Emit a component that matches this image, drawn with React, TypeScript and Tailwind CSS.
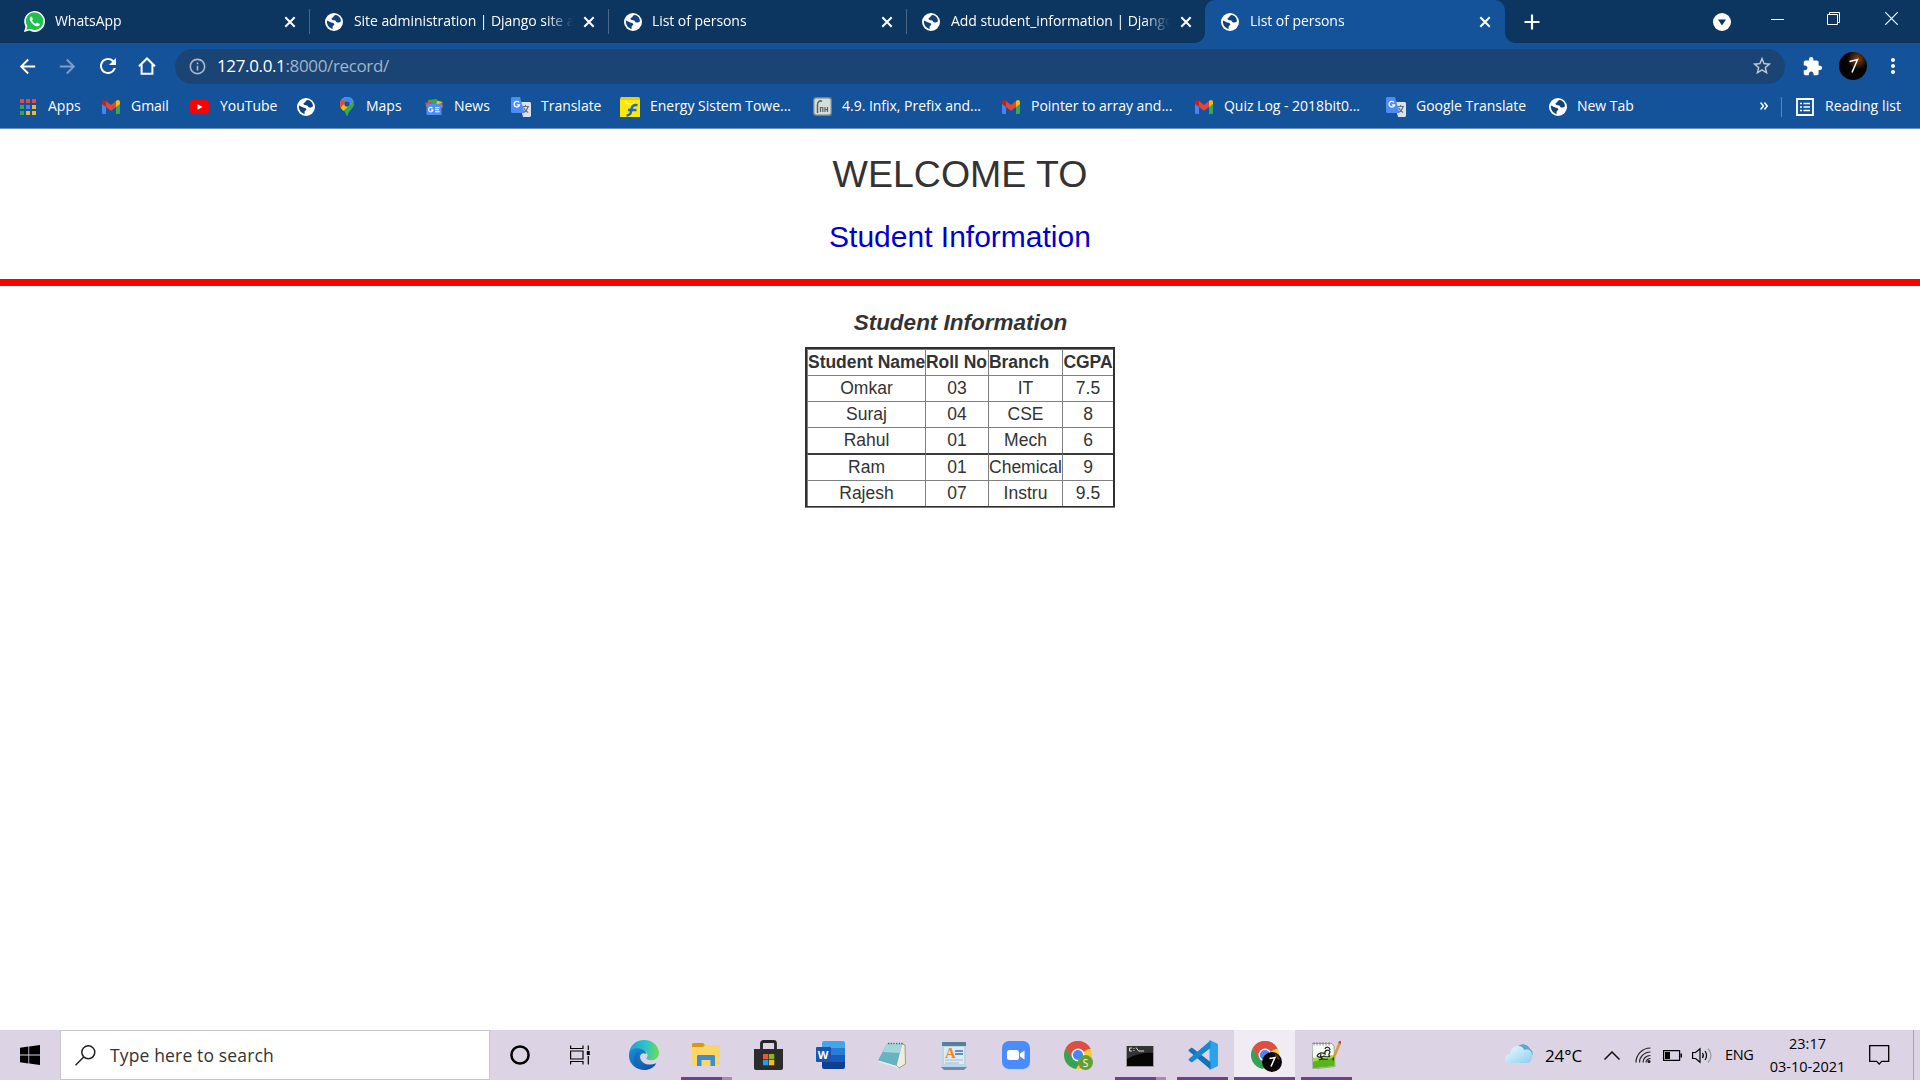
import React from "react";
import { MdArrowBack, MdArrowForward, MdRefresh, MdInfoOutline, MdStarBorder, MdExtension, MdMoreVert } from "react-icons/md";

const uiFont = "font-['Open_Sans','Noto_Sans',sans-serif]";

function Globe() {
  return (
    <svg className="size-[18px] shrink-0" viewBox="0 0 18 18">
      <circle cx="9" cy="9" r="9" fill="#fff" />
      <path d="M10.8 1.9 C8 2.4 9.2 4 7.2 4.8 C6 5.3 6.6 6.6 7.6 6.9 L10.2 7.4 C11.2 7.8 11 9.4 12.5 9.4 L14 9.4 L15.9 8.6 C16.2 5 14 2.5 10.8 1.9Z" fill="#12427c" />
      <path d="M2 7.6 L6.2 9.5 C7.6 10 9 10 9.3 11.2 C9.5 12.4 7.6 12.4 7.6 13.8 L7.6 15.9 C4 15.4 1.3 11.5 2 7.6Z" fill="#12427c" />
    </svg>
  );
}

function WhatsApp() {
  return (
    <svg className="size-[21px] shrink-0" viewBox="0 0 24 24">
      <path d="M0 24l1.7-6.2A11.9 11.9 0 1 1 6.3 22.4Z" fill="#fff" />
      <path d="M2.7 21.3l1.1-4.1A10 10 0 1 1 7 20.2Z" fill="#1fc04c" />
      <path d="M8.6 6.2c-.6 0-2.3 1-2 3.1.4 3 4.6 7.6 8.1 8.1 2 .3 3.2-1 3.3-2.3 0-.5-.2-.6-2.8-1.8-.8-.3-1.2 1.4-1.8 1.4-1.4-.3-3.8-2.4-4.2-3.9.1-.5 1.1-1 .9-1.6C9.3 7 9.3 6.300 8.600 6.200Z" fill="#fff" />
    </svg>
  );
}

function AppsIcon() {
  const colors = ["#e8483c", "#e8483c", "#e8483c", "#2fa45a", "#3f83f0", "#f4b52a", "#2fa45a", "#f4b52a", "#f4b52a"];
  return (
    <div className="grid grid-cols-3 gap-[2px]">
      {colors.map((c, i) => (
        <i key={i} className="size-[4px]" style={{ background: c }} />
      ))}
    </div>
  );
}

function Gmail() {
  return (
    <svg className="h-[14px] w-[18px] shrink-0" viewBox="0 0 18 14">
      <path d="M0 2v10.500C0 13.500.6 14 1.400 14H4V6Z" fill="#4285f4" />
      <path d="M18 2v10.500c0 1-.6 1.500-1.400 1.500H14V6Z" fill="#34a853" />
      <path d="M0 2.200C0 .2 2-.5 3.400.6L4 1.100V7L0 4Z" fill="#c5221f" />
      <path d="M18 2.200c0-2-2-2.700-3.400-1.600l-.6.5V7l4-3Z" fill="#fbbc04" />
      <path d="M4 1.100 9 5l5-3.900V7l-5 3.800L4 7Z" fill="#ea4335" />
    </svg>
  );
}

function YouTube() {
  return (
    <svg className="h-[14px] w-[19px] shrink-0" viewBox="0 0 19 14">
      <rect width="19" height="14" rx="3.500" fill="#f00" />
      <path d="M7.500 4.200v5.600l5-2.800Z" fill="#fff" />
    </svg>
  );
}

function MapsPin() {
  return (
    <svg className="h-[19px] w-[14px] shrink-0" viewBox="0 0 14 19">
      <path d="M7 0a7 7 0 0 1 7 7c0 4.500-5.500 6.500-6.200 11-.1 1.300-1.500 1.300-1.600 0C5.600 13.500 0 11.500 0 7a7 7 0 0 1 7-7Z" fill="#34a853" />
      <path d="M7 0a7 7 0 0 1 6.500 4.400L3.300 14C1.500 12 0 10 0 7a7 7 0 0 1 7-7Z" fill="#fbbc04" />
      <path d="M7 0a7 7 0 0 1 6.500 4.400L7 9.500 1.800 2.400A7 7 0 0 1 7 0Z" fill="#4285f4" />
      <path d="M1.800 2.400 5.400 5.500.8 10.500C-.4 7.500-.2 4.500 1.800 2.400Z" fill="#ea4335" />
      <circle cx="7" cy="7" r="2.600" fill="#1d4f96" />
    </svg>
  );
}

function News() {
  return (
    <svg className="h-[16px] w-[18px] shrink-0" viewBox="0 0 18 16">
      <path d="M3 1 12 0v5H3Z" fill="#34a853" />
      <path d="M12 1.500 17.500 3 16 8h-5Z" fill="#fbbc04" />
      <path d="M0 4l6-1.500L8 8 2 9Z" fill="#ea4335" />
      <path d="M17 3.500 18 8l-3 2-4-4Z" fill="#e8604a" />
      <rect x="1.500" y="5" width="15" height="11" rx="1" fill="#4f8df5" />
      <path d="M7.500 9.300A2.200 2.200 0 1 0 7.900 11H6M10 8.700h4.500M10 10.700h4M10 12.700h4.500" stroke="#fff" strokeWidth="1.100" fill="none" />
    </svg>
  );
}

function Translate() {
  return (
    <svg className="size-[20px] shrink-0" viewBox="0 0 20 20">
      <path d="M8 5h10.500c.8 0 1.500.7 1.500 1.500V18.500c0 .8-.7 1.500-1.500 1.500H12Z" fill="#dde2ea" />
      <path d="M11 9.500h7M14.500 8v1.500M17 9.500c-.7 3-2.500 5-5 6M12.500 10.500c.8 2 2.500 4 4.700 5" stroke="#68727f" strokeWidth="1.200" fill="none" />
      <path d="M1.400 0H9l4.500 16H1.400C.6 16 0 15.400 0 14.600V1.400C0 .6.600 0 1.400 0Z" fill="#4e8bf4" />
      <path d="M8 5.400A2.800 2.800 0 1 0 8.600 7.800H5.900" stroke="#fff" strokeWidth="1.300" fill="none" />
    </svg>
  );
}

function Flipkart() {
  return (
    <svg className="size-[20px] shrink-0" viewBox="0 0 20 20">
      <path d="M1 0h18l1 3v17H0V3Z" fill="#fde903" />
      <path d="M0 3h20L19 0H1Z" fill="#efc90c" />
      <path d="M5.500 4c.8 4 8.200 4 9 0" stroke="#fff8a8" strokeWidth="1.200" fill="none" />
      <path d="M17.500 8.300c-3.600-.8-5.300.4-5.900 3.200C11 15 11 18.500 6.500 18.500M8 13h8.500" stroke="#2368c4" strokeWidth="2.500" fill="none" />
    </svg>
  );
}

function Runestone() {
  return (
    <svg className="size-[19px] shrink-0" viewBox="0 0 19 19">
      <rect x=".7" y=".7" width="17.600" height="17.600" rx="2.500" fill="#d5dcda" stroke="#73827f" strokeWidth="1.400" />
      <path d="M4.500 16V8C4.500 4.500 7 3 9 4.500" stroke="#56645f" strokeWidth="1.500" fill="none" />
      <path d="M7.500 10v5M9.800 10v5M12 10v5M14.500 10v5M7.500 10.500H9M12 12.500h2.500" stroke="#56645f" strokeWidth="1.200" fill="none" />
    </svg>
  );
}

const tabs = [
  { label: "WhatsApp", icon: <WhatsApp />, width: "w-[310px] pl-[24px]", gap: "ml-[10px]", right: "mr-[13px]", active: false, divider: true },
  { label: "Site administration | Django site admin", icon: <Globe />, width: "w-[299px] pl-[15px]", gap: "ml-[11px]", right: "mr-[13px]", active: false, divider: true },
  { label: "List of persons", icon: <Globe />, width: "w-[298px] pl-[15px]", gap: "ml-[10px]", right: "mr-[13px]", active: false, divider: true },
  { label: "Add student_information | Django site", icon: <Globe />, width: "w-[298px] pl-[15px]", gap: "ml-[11px]", right: "mr-[13px]", active: false, divider: false },
  { label: "List of persons", icon: <Globe />, width: "w-[300px] pl-[16px]", gap: "ml-[11px]", right: "mr-[14px]", active: true, divider: false },
];

function TabStrip() {
  return (
    <div className="flex h-[43px] bg-[#0c3560] text-white">
      {tabs.map((t, i) => (
        <div
          key={i}
          className={`relative flex shrink-0 items-center ${t.width} ${t.active ? "rounded-t-[10px] bg-[#14529a]" : ""}`}
        >
          {t.active && (
            <>
              <i className="absolute bottom-0 -left-[10px] size-[10px] bg-[radial-gradient(circle_at_0_0,#0c3560_9.500px,#14529a_10px)]" />
              <i className="absolute -right-[10px] bottom-0 size-[10px] bg-[radial-gradient(circle_at_100%_0,#0c3560_9.500px,#14529a_10px)]" />
            </>
          )}
          {t.icon}
          <span
            className={`min-w-0 flex-1 overflow-hidden pb-[2px] text-[14px] leading-[20px] tracking-[-0.06px] whitespace-nowrap ${t.gap} [mask-image:linear-gradient(to_right,black_88%,transparent)]`}
          >
            {t.label}
          </span>
          <svg className={`ml-[10px] size-[12px] shrink-0 ${t.right}`} viewBox="0 0 12 12">
            <path d="M1.300 1.300 10.700 10.700M10.700 1.300 1.300 10.700" stroke="#fff" strokeWidth="2" />
          </svg>
          {t.divider && <i className="h-[25px] w-px shrink-0 bg-[#4a6788]" />}
        </div>
      ))}
      <div className="flex w-[54px] items-center justify-center">
        <svg className="size-[16px]" viewBox="0 0 16 16">
          <path d="M8 .5v15M.5 8h15" stroke="#fff" strokeWidth="2.200" />
        </svg>
      </div>
      <div className="flex flex-1 items-center pl-[154px]">
        <svg className="mt-px size-[18px]" viewBox="0 0 18 18">
          <circle cx="9" cy="9" r="9" fill="#fff" />
          <path d="M5 6.500h8L9 12.500Z" fill="#0c3560" />
        </svg>
        <i className="mb-[5px] ml-[40px] h-px w-[13px] bg-white" />
        <svg className="mb-[6px] ml-[43px] size-[13px]" viewBox="0 0 13 13" fill="none" stroke="#fff">
          <path d="M.5 2.500h10v10H.5ZM2.500 2.500V.5h10v10h-2" />
        </svg>
        <svg className="mb-[6px] ml-[45px] size-[13px]" viewBox="0 0 13 13" stroke="#fff" strokeWidth="1.200">
          <path d="M.3.3l12.400 12.400M12.700.3.3 12.700" />
        </svg>
      </div>
    </div>
  );
}

function Toolbar() {
  return (
    <div className="flex h-[46px] items-center bg-[#14529a] text-white">
      <MdArrowBack className="ml-[16px] size-[23px]" />
      <MdArrowForward className="ml-[17px] size-[23px] text-[#7c9fca]" />
      <MdRefresh className="ml-[17px] size-[24px]" />
      <svg className="ml-[18px] size-[18px]" viewBox="0 0 18 18" fill="none" stroke="#fff" strokeWidth="2">
        <path d="M1 9.300 9 1.500l8 7.800M3.600 7.500v9.200h10.800V7.500" />
      </svg>
      <div className="ml-[19px] flex h-[35px] w-[1610px] items-center rounded-full bg-[#194474]">
        <MdInfoOutline className="ml-[13px] size-[19px] text-[#aeb9c8]" />
        <span className="ml-[10px] flex-1 text-[17px] leading-[22px] tracking-[-0.36px] text-[#a3b4ca]">
          <span className="text-white">127.0.0.1</span>:8000/record/
        </span>
        <MdStarBorder className="mr-[12px] size-[22px] text-[#c3c9d0]" />
      </div>
      <MdExtension className="ml-[17px] size-[21px]" />
      <svg className="ml-[16px] size-[28px]" viewBox="0 0 28 28">
        <defs>
          <radialGradient id="flare" cx=".66" cy=".25" r=".38">
            <stop offset="0" stopColor="#8a4310" />
            <stop offset="1" stopColor="#050303" />
          </radialGradient>
        </defs>
        <circle cx="14" cy="14" r="14" fill="url(#flare)" />
        <path d="M10.500 9.500l8-2-5.500 13" stroke="#fff" strokeWidth="1.500" fill="none" />
      </svg>
      <MdMoreVert className="ml-[14px] size-[24px]" />
    </div>
  );
}

const bookmarks = [
  { icon: <AppsIcon />, label: "Apps", slot: "w-[82px]", pad: "w-[28px]" },
  { icon: <Gmail />, label: "Gmail", slot: "w-[88px]", pad: "w-[29px]" },
  { icon: <YouTube />, label: "YouTube", slot: "w-[107px]", pad: "w-[30px]" },
  { icon: <Globe />, label: "", slot: "w-[43px]", pad: "w-[30px]" },
  { icon: <MapsPin />, label: "Maps", slot: "w-[85px]", pad: "w-[26px]" },
  { icon: <News />, label: "News", slot: "w-[86px]", pad: "w-[29px]" },
  { icon: <Translate />, label: "Translate", slot: "w-[109px]", pad: "w-[30px]" },
  { icon: <Flipkart />, label: "Energy Sistem Towe...", slot: "w-[193px]", pad: "w-[30px]" },
  { icon: <Runestone />, label: "4.9. Infix, Prefix and...", slot: "w-[189px]", pad: "w-[29px]" },
  { icon: <Gmail />, label: "Pointer to array and...", slot: "w-[193px]", pad: "w-[29px]" },
  { icon: <Gmail />, label: "Quiz Log - 2018bit0...", slot: "w-[191px]", pad: "w-[29px]" },
  { icon: <Translate />, label: "Google Translate", slot: "w-[163px]", pad: "w-[30px]" },
  { icon: <Globe />, label: "New Tab", slot: "w-[120px]", pad: "w-[28px]" },
];

function Bookmarks() {
  return (
    <div className="flex h-[40px] items-center border-b border-[#6b8cb8] bg-[#14529a] pb-[4px] pl-[20px] text-[14px] leading-[20px] text-white">
      {bookmarks.map((b, i) => (
        <div key={i} className={`flex shrink-0 items-center whitespace-nowrap ${b.slot}`}>
          <span className={`flex shrink-0 ${b.pad}`}>{b.icon}</span>
          <span className="pb-[2px] tracking-[-0.02px]">{b.label}</span>
        </div>
      ))}
      <div className="flex flex-1 items-center pl-[91px]">
        <svg className="mb-[2px] h-[8px] w-[8px]" viewBox="0 0 8 8" fill="none" stroke="#fff" strokeWidth="1.500">
          <path d="M.6.6 3.400 4 .6 7.400M4.400.6 7.200 4 4.400 7.400" />
        </svg>
        <i className="ml-[13px] h-[20px] w-px bg-[#5b86ba]" />
        <svg className="ml-[14px] size-[18px]" viewBox="0 0 18 18" fill="none" stroke="#fff">
          <path d="M1 1h16v16H1Z" strokeWidth="1.800" />
          <path d="M4 5.500h2M4 9h2M4 12.500h2M7.500 5.500H14M7.500 9H14M7.500 12.500H14" strokeWidth="1.600" />
        </svg>
        <span className="ml-[11px] pb-[2px] tracking-[0.1px] whitespace-nowrap">Reading list</span>
      </div>
    </div>
  );
}

const students = [
  ["Omkar", "03", "IT", "7.5"],
  ["Suraj", "04", "CSE", "8"],
  ["Rahul", "01", "Mech", "6"],
  ["Ram", "01", "Chemical", "9"],
  ["Rajesh", "07", "Instru", "9.5"],
];

function Page() {
  return (
    <main className="flex-1 bg-white font-['Liberation_Sans',Arial,sans-serif] text-[#333]">
      <h1 className="pt-[25px] text-center text-[37.5px] leading-[41px]">WELCOME TO</h1>
      <h3 className="pt-[25px] text-center text-[30px] leading-[33px] text-[#0000cc]">Student Information</h3>
      <div className="mt-[26px] h-[7px] bg-[#fe0000]" />
      <h4 className="pt-[25px] pl-px text-center text-[22.5px] leading-[24px] font-bold italic">Student Information</h4>
      <div className="mx-auto mt-[12px] w-[310px] border-b border-[#777]">
        <table className="w-full table-fixed border-separate border-spacing-0 border-t-2 border-r-2 border-b border-l-2 border-[#303030] text-center text-[17.5px] leading-[25px]">
          <colgroup>
            <col className="w-[118px]" />
            <col className="w-[63px]" />
            <col className="w-[74px]" />
            <col />
          </colgroup>
          <thead>
            <tr>
              {["Student Name", "Roll No", "Branch", "CGPA"].map((h) => (
                <th key={h} className={`border-t border-l border-[#808080] p-0 font-bold tracking-[-0.04px] whitespace-nowrap ${h === "CGPA" ? "text-center" : "text-left"}`}>
                  {h}
                </th>
              ))}
            </tr>
          </thead>
          <tbody>
            {students.map((row) => (
              <tr key={row[0]}>
                {row.map((c, i) => (
                  <td key={i} className={`border-l border-l-[#808080] p-0 ${row[0] === "Ram" ? "border-t-2 border-t-[#3c3c3c]" : "border-t border-t-[#808080]"}`}>
                    {c}
                  </td>
                ))}
              </tr>
            ))}
          </tbody>
        </table>
      </div>
    </main>
  );
}

function Edge() {
  return (
    <svg className="size-[30px]" viewBox="0 0 30 30">
      <defs>
        <linearGradient id="edgeTop" x1="0" y1=".4" x2="1" y2=".5">
          <stop offset="0" stopColor="#1c9fde" />
          <stop offset=".55" stopColor="#2fc3c8" />
          <stop offset="1" stopColor="#6ddb55" />
        </linearGradient>
        <linearGradient id="edgeLow" x1="0" y1="0" x2="1" y2="1">
          <stop offset="0" stopColor="#1b8fd8" />
          <stop offset="1" stopColor="#0d4a9c" />
        </linearGradient>
      </defs>
      <path d="M0 14C1 5 7 0 15 0c9 0 15 6.500 15 13 0 4.500-3.500 7.300-8 7.300-3.500 0-5-1.200-4.500-2.300 3-3-.3-7.500-5.500-7.500C6 9 2 10 0 14Z" fill="url(#edgeTop)" />
      <path d="M0 14C1.500 8.500 6.500 7.600 10.500 8.600c4 1 6.500 3 6.800 5.400C13 11.500 10 15 11.500 19c1.800 4.800 8 7.300 15.800 4.200C25 27.500 20.500 30 15.500 30 7 30-.8 24 0 14Z" fill="url(#edgeLow)" />
      <path d="M10.500 12C6.500 16 8 26 15.500 30 10 29.500 5 26 5 20c0-4 2.500-7 5.500-8Z" fill="#0f66b8" opacity=".6" />
    </svg>
  );
}

function Explorer() {
  return (
    <svg className="h-[24px] w-[28px]" viewBox="0 0 28 24">
      <path d="M0 1.500C0 .6.600 0 1.500 0H11l2 2h13.500c.8 0 1.500.7 1.500 1.500V22H0Z" fill="#fbd568" />
      <path d="M0 1.500C0 .6.600 0 1.500 0H11l2 2-2 2H0Z" fill="#d9990f" />
      <path d="M5 23v-9.500c0-.8.700-1.500 1.500-1.500h15c.8 0 1.500.7 1.500 1.500V23h-4.500v-6h-9v6Z" fill="#3b8ed0" />
    </svg>
  );
}

function Store() {
  return (
    <svg className="h-[30px] w-[29px]" viewBox="0 0 29 30">
      <path d="M7.500 10V3.500c0-1.200.8-2 2-2h10c1.200 0 2 .8 2 2V10" fill="none" stroke="#252525" strokeWidth="2.800" />
      <path d="M0 9h29v19c0 1.200-.8 2-2 2H2c-1.200 0-2-.8-2-2Z" fill="#2c2c2c" />
      <path d="M9 14h5.300v5.300H9Z" fill="#f2552c" />
      <path d="M15 14h5.300v5.300H15Z" fill="#7ebb16" />
      <path d="M9 20h5.300v5.300H9Z" fill="#12a5ee" />
      <path d="M15 20h5.300v5.300H15Z" fill="#fcba12" />
    </svg>
  );
}

function Word() {
  return (
    <div className="relative h-[28px] w-[29px] shrink-0">
      <div className="ml-[6px] flex h-[28px] flex-col overflow-hidden rounded-[2px]">
        <i className="flex-1 bg-[#41a5ee]" />
        <i className="flex-1 bg-[#2b7cd3]" />
        <i className="flex-1 bg-[#185abd]" />
        <i className="flex-1 bg-[#103f91]" />
      </div>
      <b className="absolute top-[6px] left-0 flex size-[15px] items-center justify-center rounded-[1px] bg-[#1a55b0] text-[11px] leading-none text-white">W</b>
    </div>
  );
}

function Notepad() {
  return (
    <svg className="size-[28px]" viewBox="0 0 28 28">
      <path d="M23 2.500 27 4l.5 19-6.500 4-3-3Z" fill="#f1ece0" stroke="#8a7a5c" strokeWidth=".7" />
      <path d="M9 2.500 24 3.500 18.500 25 0 19.500Z" fill="#68b3c0" />
      <path d="M9 2.500 24 3.500 21.800 12 4.700 11Z" fill="#a5d6dc" />
      <path d="M0 19.500 18.500 25l2.500 2L1 21Z" fill="#e6f2f3" />
      <path d="M10 2.500h15" stroke="#555" strokeWidth="1.500" strokeDasharray="1.200 1.500" />
    </svg>
  );
}

function Wordpad() {
  return (
    <div className="relative">
      <svg className="h-[29px] w-[26px]" viewBox="0 0 26 29">
        <path d="M1 1h24v22l1 3-3 3H3l-3-3 1-3Z" fill="#b9d6ea" />
        <path d="M1 1h24v4H1Z" fill="#587f9e" />
        <path d="M3 6h20v17H3Z" fill="#dcebf6" />
        <path d="M14 10h8M14 13h8" stroke="#3a70b4" strokeWidth="1.700" />
        <path d="M4 19h18M4 22h14" stroke="#a5b8c8" />
        <path d="M0 26h26l-3 3H3Z" fill="#6e8ca6" />
      </svg>
      <b className="absolute top-[5px] left-[4px] font-['Liberation_Serif',serif] text-[15px] leading-[14px] text-[#ee8a25]">A</b>
    </div>
  );
}

function ZoomApp() {
  return (
    <svg className="size-[28px]" viewBox="0 0 28 28">
      <rect width="28" height="28" rx="7" fill="#4a8cfb" />
      <rect x="5" y="9" width="12" height="10" rx="2.500" fill="#fff" />
      <path d="M18 12.500 22.500 9.500v9L18 15.500Z" fill="#fff" />
    </svg>
  );
}

function Chrome({ badge }: { badge: "S" | "7" }) {
  return (
    <div className="relative size-[28px]">
      <svg className="size-[28px]" viewBox="0 0 28 28">
        <circle cx="14" cy="14" r="14" fill="#fbcb3c" />
        <path d="M14 14 1.880 7A14 14 0 0 1 26.100 7Z" fill="#dd4f43" />
        <path d="M1.880 7A14 14 0 0 0 12 27.900L18 17 8 16Z" fill="#35a15a" />
        <path d="M1.880 7 8 17.500 14 8h12.600A14 14 0 0 0 1.880 7Z" fill="#dd4f43" />
        <circle cx="14" cy="14" r="6.500" fill="#fff" />
        <circle cx="14" cy="14" r="5.100" fill="#4587f3" />
      </svg>
      {badge === "S" ? (
        <span className="absolute top-[14px] left-[14px] flex size-[15px] items-center justify-center rounded-full bg-[#62a030] text-[10px] leading-none text-white">S</span>
      ) : (
        <svg className="absolute top-[11px] left-[11px] size-[20px]" viewBox="0 0 20 20">
          <circle cx="10" cy="10" r="10" fill="#080504" />
          <path d="M13 2.500a8 8 0 0 1 4 5" stroke="#5c2e10" strokeWidth="2" fill="none" />
          <path d="M7.500 6.500 13 5.500 9 14.500" stroke="#fff" strokeWidth="1.500" fill="none" />
        </svg>
      )}
    </div>
  );
}

function Cmd() {
  return (
    <svg className="h-[24px] w-[28px]" viewBox="0 0 28 24">
      <rect width="28" height="24" fill="#9b9b9b" />
      <rect x="1" y="3" width="26" height="20" fill="#050505" />
      <path d="M1 3h26v7C18 9 8 12 1 16Z" fill="#333" />
      <path d="M0 0h28v3H0Z" fill="#d7d7d7" />
      <path d="M3.500 5h2.500M3.500 8h2.500M3.500 5v3M8 5v1M8 7v1M10 4.500l3 4M13 8h5" stroke="#ddd" strokeWidth="1" />
    </svg>
  );
}

function VsCode() {
  return (
    <svg className="size-[30px]" viewBox="0 0 30 30">
      <path d="M21.500 0 29 3.500c.6.300 1 .8 1 1.500v20c0 .7-.4 1.200-1 1.500L21.500 30Z" fill="#2ba3ea" />
      <path d="M1 9.500 3 8c.5-.3 1-.2 1.500.1L22.500 22v7.500L1 11.200c-.6-.5-.6-1.200 0-1.700Z" fill="#1274b8" />
      <path d="M1 20.500 3 22c.5.300 1 .2 1.500-.1L22.500 8V.5L1 18.800c-.6.500-.6 1.200 0 1.700Z" fill="#1a86cd" />
    </svg>
  );
}

function NotepadPP() {
  return (
    <svg className="h-[28px] w-[29px]" viewBox="0 0 29 28">
      <path d="M0 2.500h20l2 3 1 20L1 28Z" fill="#f7f9f4" stroke="#8b9488" strokeWidth=".8" />
      <path d="M1 17 22.500 14v11L1 27.300Z" fill="#a4dd45" />
      <path d="M1 21c7-3 14-2 21.500-5v9L1 27.300Z" fill="#5ab41d" />
      <path d="M5 15c1-3 5-4 8-2-1-4 4-5 5-2-1 2-2 3 0 4M5 15c2 2 5 1 7 0 2 1 5 1 6 0M7 19c2-2 6 0 9-1M13 8c1-3 5-2 5 1M9 13c-1 2 0 4 2 5" fill="none" stroke="#1d2a12" strokeWidth="1.200" />
      <path d="M2 1v3.500M5 1v3.500M8 1v3.500M11 1v3.500M14 1v3.500M17 1v3.500" stroke="#737373" strokeWidth=".8" />
      <path d="M28 1.500 21.500 17" stroke="#dc9a34" strokeWidth="2.600" />
      <path d="M28.500 0 27.500 2.500" stroke="#b9474b" strokeWidth="2.600" />
      <path d="M21.600 16.500 20.800 19.500" stroke="#333" strokeWidth="1.300" />
    </svg>
  );
}

type Mark = "none" | "full" | "multi";
const apps: { icon: React.ReactNode; mark: Mark; slot: string; active?: boolean }[] = [
  { icon: <Edge />, mark: "none", slot: "w-[62px]" },
  { icon: <Explorer />, mark: "multi", slot: "w-[62px]" },
  { icon: <Store />, mark: "none", slot: "w-[62px]" },
  { icon: <Word />, mark: "none", slot: "w-[62px]" },
  { icon: <Notepad />, mark: "none", slot: "w-[62px]" },
  { icon: <Wordpad />, mark: "none", slot: "w-[62px]" },
  { icon: <ZoomApp />, mark: "none", slot: "w-[62px]" },
  { icon: <Chrome badge="S" />, mark: "none", slot: "w-[62px]" },
  { icon: <Cmd />, mark: "multi", slot: "w-[62px]" },
  { icon: <VsCode />, mark: "full", slot: "w-[63px]" },
  { icon: <Chrome badge="7" />, mark: "full", slot: "w-[61px]", active: true },
  { icon: <NotepadPP />, mark: "full", slot: "w-[62px]" },
];

function Taskbar() {
  return (
    <footer className="flex h-[50px] items-stretch bg-[#dcd4e5] text-black">
      <div className="flex w-[60px] items-center justify-center">
        <svg className="size-[20px]" viewBox="0 0 20 20">
          <path d="M0 2.800 8.400 1.600V9.500H0ZM9.200 1.500 20 0V9.500H9.200ZM0 10.400H8.400V18.400L0 17.200ZM9.200 10.400H20V20L9.200 18.500Z" />
        </svg>
      </div>
      <div className="flex w-[430px] items-center border border-[#c9c5ce] bg-white">
        <svg className="ml-[14px] size-[21px]" viewBox="0 0 21 21" fill="none" stroke="#222" strokeWidth="1.500">
          <circle cx="13.300" cy="7.300" r="6.500" />
          <path d="M8.700 12 .5 20.300" />
        </svg>
        <span className="ml-[14px] text-[17.5px] leading-[24px] tracking-[0.15px] text-[#333]">Type here to search</span>
      </div>
      <div className="flex w-[60px] items-center justify-center">
        <svg className="size-[20px]" viewBox="0 0 20 20">
          <circle cx="10" cy="10" r="8.600" fill="none" stroke="#000" strokeWidth="2.500" />
        </svg>
      </div>
      <div className="flex w-[63px] items-center pl-[20px]">
        <svg className="size-[20px]" viewBox="0 0 20 20" fill="none" stroke="#000" strokeWidth="1.200">
          <path d="M.6.500V3.500H13V.5M.6 19.500V16.500H13V19.500M.6 6H13V14H.6ZM18.300.500V5M18.300 11v8.500" />
          <path d="M18.300 6v4" strokeWidth="3" />
        </svg>
      </div>
      {apps.map((a, i) => (
        <div key={i} className={`flex shrink-0 flex-col items-center ${a.slot} ${a.active ? "bg-[#f0ecf4]" : ""}`}>
          <div className="flex flex-1 items-center justify-center pt-[3px]">{a.icon}</div>
          <div className={`flex h-[3px] ${a.active ? "w-full" : "w-[51px]"}`}>
            {a.mark !== "none" && <i className="flex-1 bg-[#7f3798]" />}
            {a.mark === "multi" && <i className="w-[10px] bg-[#b083c3]" />}
          </div>
        </div>
      ))}
      <div className="flex flex-1 items-center pl-[148px]">
        <svg className="mb-[4px] h-[19px] w-[28px] shrink-0" viewBox="0 0 28 19">
          <defs>
            <linearGradient id="cloud" x1="0" y1="0" x2="1" y2="1">
              <stop offset="0" stopColor="#f0fbff" />
              <stop offset="1" stopColor="#8ccdf0" />
            </linearGradient>
          </defs>
          <path d="M12 4C14-1 23-1 25 5c2 1 3 3 2.500 6l-5 4Z" fill="#5ba7d4" />
          <path d="M5 19c-7 0-6.500-9 0-8.500C5.500 2 16-1.500 19.500 6c4-1.500 8 1 7.500 5.500 0 5-2 7.500-5 7.500Z" fill="url(#cloud)" />
        </svg>
        <span className="ml-[12px] w-[48px] pt-px text-[17px] leading-[24px] whitespace-nowrap tracking-[-0.1px]">24°C</span>
        <svg className="ml-[11px] h-[9px] w-[16px] shrink-0" viewBox="0 0 16 9" fill="none" stroke="#111" strokeWidth="1.500">
          <path d="M.5 8.500 8 1l7.500 7.500" />
        </svg>
        <svg className="ml-[15px] size-[16px] shrink-0" viewBox="0 0 16 16" fill="none" stroke="#222" strokeWidth="1.200">
          <path d="M1 15.500C1 8 7 1 15.500 1M4.500 15.500C4.500 10 9 5 15.500 5M8 15.500c0-4 3-7 7.500-7M11 15.500c0-2 2-4 4.500-4" />
          <circle cx="14" cy="14.500" r="1" fill="#111" />
        </svg>
        <svg className="ml-[12px] h-[11px] w-[19px] shrink-0" viewBox="0 0 19 11">
          <path d="M.6.600h16v9.800h-16Z" fill="none" stroke="#000" strokeWidth="1.200" />
          <path d="M2 2h5v7H2ZM17.500 3.500H19v4h-1.500Z" />
        </svg>
        <svg className="ml-[10px] h-[17px] w-[21px] shrink-0" viewBox="0 0 21 17" fill="none" stroke="#000" strokeWidth="1.200">
          <path d="M.6 5.500h3L8 1.800v13.400l-4.400-3.700h-3ZM10.500 6c1 1.500 1 3.500 0 5M13 4c2 2.500 2 6.500 0 9" />
          <path d="M16 1.500c4 4 4 10 0 14" stroke="#999" />
        </svg>
        <span className="ml-[12px] w-[30px] text-[14.5px] leading-[20px] tracking-[-0.3px]">ENG</span>
        <div className="ml-[14px] flex w-[77px] shrink-0 flex-col items-center text-[14.5px] leading-[23px] tracking-[0px] whitespace-nowrap">
          <span>23:17</span>
          <span>03-10-2021</span>
        </div>
        <svg className="ml-[23px] h-[21px] w-[21px] shrink-0" viewBox="0 0 21 21" fill="none" stroke="#000" strokeWidth="1.300">
          <path d="M.7.700h19v15.600h-7l-2.500 2.800-2.500-2.800h-7Z" />
        </svg>
        <i className="ml-[23px] h-full w-px bg-[#a9a2b2]" />
      </div>
    </footer>
  );
}

export default function App() {
  return (
    <div className={`flex h-[1080px] w-[1920px] flex-col overflow-hidden bg-white ${uiFont}`}>
      <header>
        <TabStrip />
        <Toolbar />
        <Bookmarks />
      </header>
      <Page />
      <Taskbar />
    </div>
  );
}
